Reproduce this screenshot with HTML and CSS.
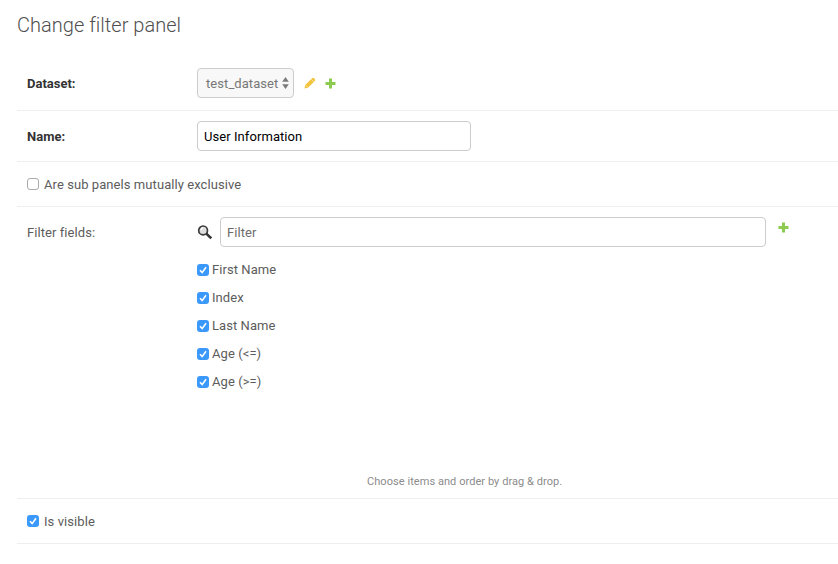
FILE: index.html
```html
<!DOCTYPE html>
<html lang="en">
<head>
<meta charset="utf-8">
<title>Change filter panel</title>
<link rel="stylesheet" href="styles.css">
</head>
<body>
<svg class="symbols" aria-hidden="true">
  <symbol id="plus" viewBox="0 0 11 11"><path d="M4 0.5h3V4h3.5v3H7v3.500H4V7H0.500V4H4z" fill="#8dcb50"/></symbol>
  <symbol id="tick" viewBox="0 0 12 12"><path d="M3 6.300L5.200 8.600L9 3.300" fill="none" stroke="#fff" stroke-width="1.600"/></symbol>
</svg>
<main class="content">
  <h1 class="title">Change filter panel</h1>
  <form class="form">
    <div class="row row-dataset">
      <span class="label required">Dataset:</span>
      <div class="select"><span class="value">test_dataset</span>
        <svg class="arrows" viewBox="0 0 7 12"><path d="M3.500 0L6.800 4.800H0.200zM3.500 12L6.800 7.200H0.200z" fill="#7b7b7b"/></svg>
      </div>
      <svg class="pencil" viewBox="0 0 12 12"><path d="M0.500 11.500L1.200 8L7.800 1.400Q9 0.300 10 1.200L10.800 2Q11.700 3 10.600 4.200L4 10.800z" fill="#f2c43d"/><path d="M7.200 2.200L9.800 4.800M1.700 8.300L3.700 10.300" stroke="#fff" stroke-width=".7" opacity=".7"/></svg>
      <svg class="plus"><use href="#plus"/></svg>
    </div>
    <div class="row row-name">
      <span class="label required">Name:</span>
      <div class="input name-input"><span class="value">User Information</span></div>
    </div>
    <div class="row row-exclusive">
      <span class="check"></span><span class="check-label">Are sub panels mutually exclusive</span>
    </div>
    <div class="row row-fields">
      <span class="label fields-label">Filter fields:</span>
      <div class="selector">
        <div class="search">
          <svg class="magnifier" viewBox="0 0 15 15"><circle cx="6.100" cy="5.400" r="4.400" fill="#dedede" stroke="#3b3b3b" stroke-width="1.700"/><path d="M3.900 5.100Q4.200 3.100 6.200 2.900" fill="none" stroke="#fff" stroke-width="1.200"/><path d="M9.300 8.600L14.200 13.300" stroke="#333" stroke-width="2.500"/></svg>
          <div class="input filter-input"><span class="value">Filter</span></div>
        </div>
        <ul class="fields">
          <li class="field"><span class="check checked"><svg><use href="#tick"/></svg></span><span class="field-name">First Name</span></li>
          <li class="field"><span class="check checked"><svg><use href="#tick"/></svg></span><span class="field-name">Index</span></li>
          <li class="field"><span class="check checked"><svg><use href="#tick"/></svg></span><span class="field-name">Last Name</span></li>
          <li class="field"><span class="check checked"><svg><use href="#tick"/></svg></span><span class="field-name">Age (&lt;=)</span></li>
          <li class="field"><span class="check checked"><svg><use href="#tick"/></svg></span><span class="field-name">Age (&gt;=)</span></li>
        </ul>
        <p class="help">Choose items and order by drag &amp; drop.</p>
      </div>
      <svg class="plus fields-plus"><use href="#plus"/></svg>
    </div>
    <div class="row row-visible">
      <span class="check checked"><svg><use href="#tick"/></svg></span><span class="check-label">Is visible</span>
    </div>
  </form>
</main>
</body>
</html>
```

FILE: styles.css
```css
* { box-sizing: border-box; }
body { margin: 0; background: #fff; color: #5c5c5c; font: 400 13px/16px Roboto, sans-serif; letter-spacing: .07px; overflow: hidden; }
svg { display: block; flex: none; }
.symbols { width: 0; height: 0; position: absolute; }
.content { padding: 14px 0 0 17px; }
.title { margin: 0; height: 42px; font-size: 20px; line-height: 22px; font-weight: 300; letter-spacing: .02px; color: #505050; }
.row { display: flex; align-items: center; padding-left: 10px; border-bottom: 1px solid #eee; }
.row-dataset { height: 55px; }
.row-name { height: 51px; }
.row-exclusive { height: 45px; }
.row-fields { height: 292px; align-items: flex-start; padding-top: 10px; }
.row-visible { height: 45px; }
.label { width: 170px; flex: none; padding-top: 2px; }
.required { font-weight: 700; letter-spacing: 0; color: #333; }
.fields-label { padding-top: 8px; }
.value { padding-top: 2px; }
.select { display: flex; align-items: center; justify-content: space-between; width: 97px; height: 30px; padding: 0 4px 0 8px; border: 1px solid #ccc; border-radius: 4px; background: #f8f8f8; color: #777; }
.arrows { width: 7px; height: 12px; }
.pencil { width: 12px; height: 12px; margin-left: 10px; }
.plus { width: 11px; height: 11px; margin-left: 9px; }
.input { display: flex; align-items: center; height: 30px; padding: 0 6px; border: 1px solid #ccc; border-radius: 4px; background: #fff; }
.name-input { width: 274px; color: #000; }
.filter-input { width: 546px; color: #6c6c6c; }
.check { width: 12px; height: 12px; flex: none; border: 1px solid #aaa; border-radius: 3px; background: #fff; }
.checked { border: 0; background: #3b99fc; }
.checked svg { width: 12px; height: 12px; }
.check-label { margin-left: 5px; padding-top: 2px; }
.selector { width: 569px; }
.search { display: flex; align-items: center; }
.magnifier { width: 15px; height: 15px; margin-right: 8px; }
.fields { margin: 9px 0 0; padding: 0; list-style: none; }
.field { display: flex; align-items: center; height: 28px; }
.field-name { margin-left: 3px; }
.help { margin: 79px 0 0 170px; font-size: 11px; line-height: 14px; letter-spacing: .06px; color: #8c8c8c; }
.fields-plus { margin: 5px 0 0 12px; }
```
